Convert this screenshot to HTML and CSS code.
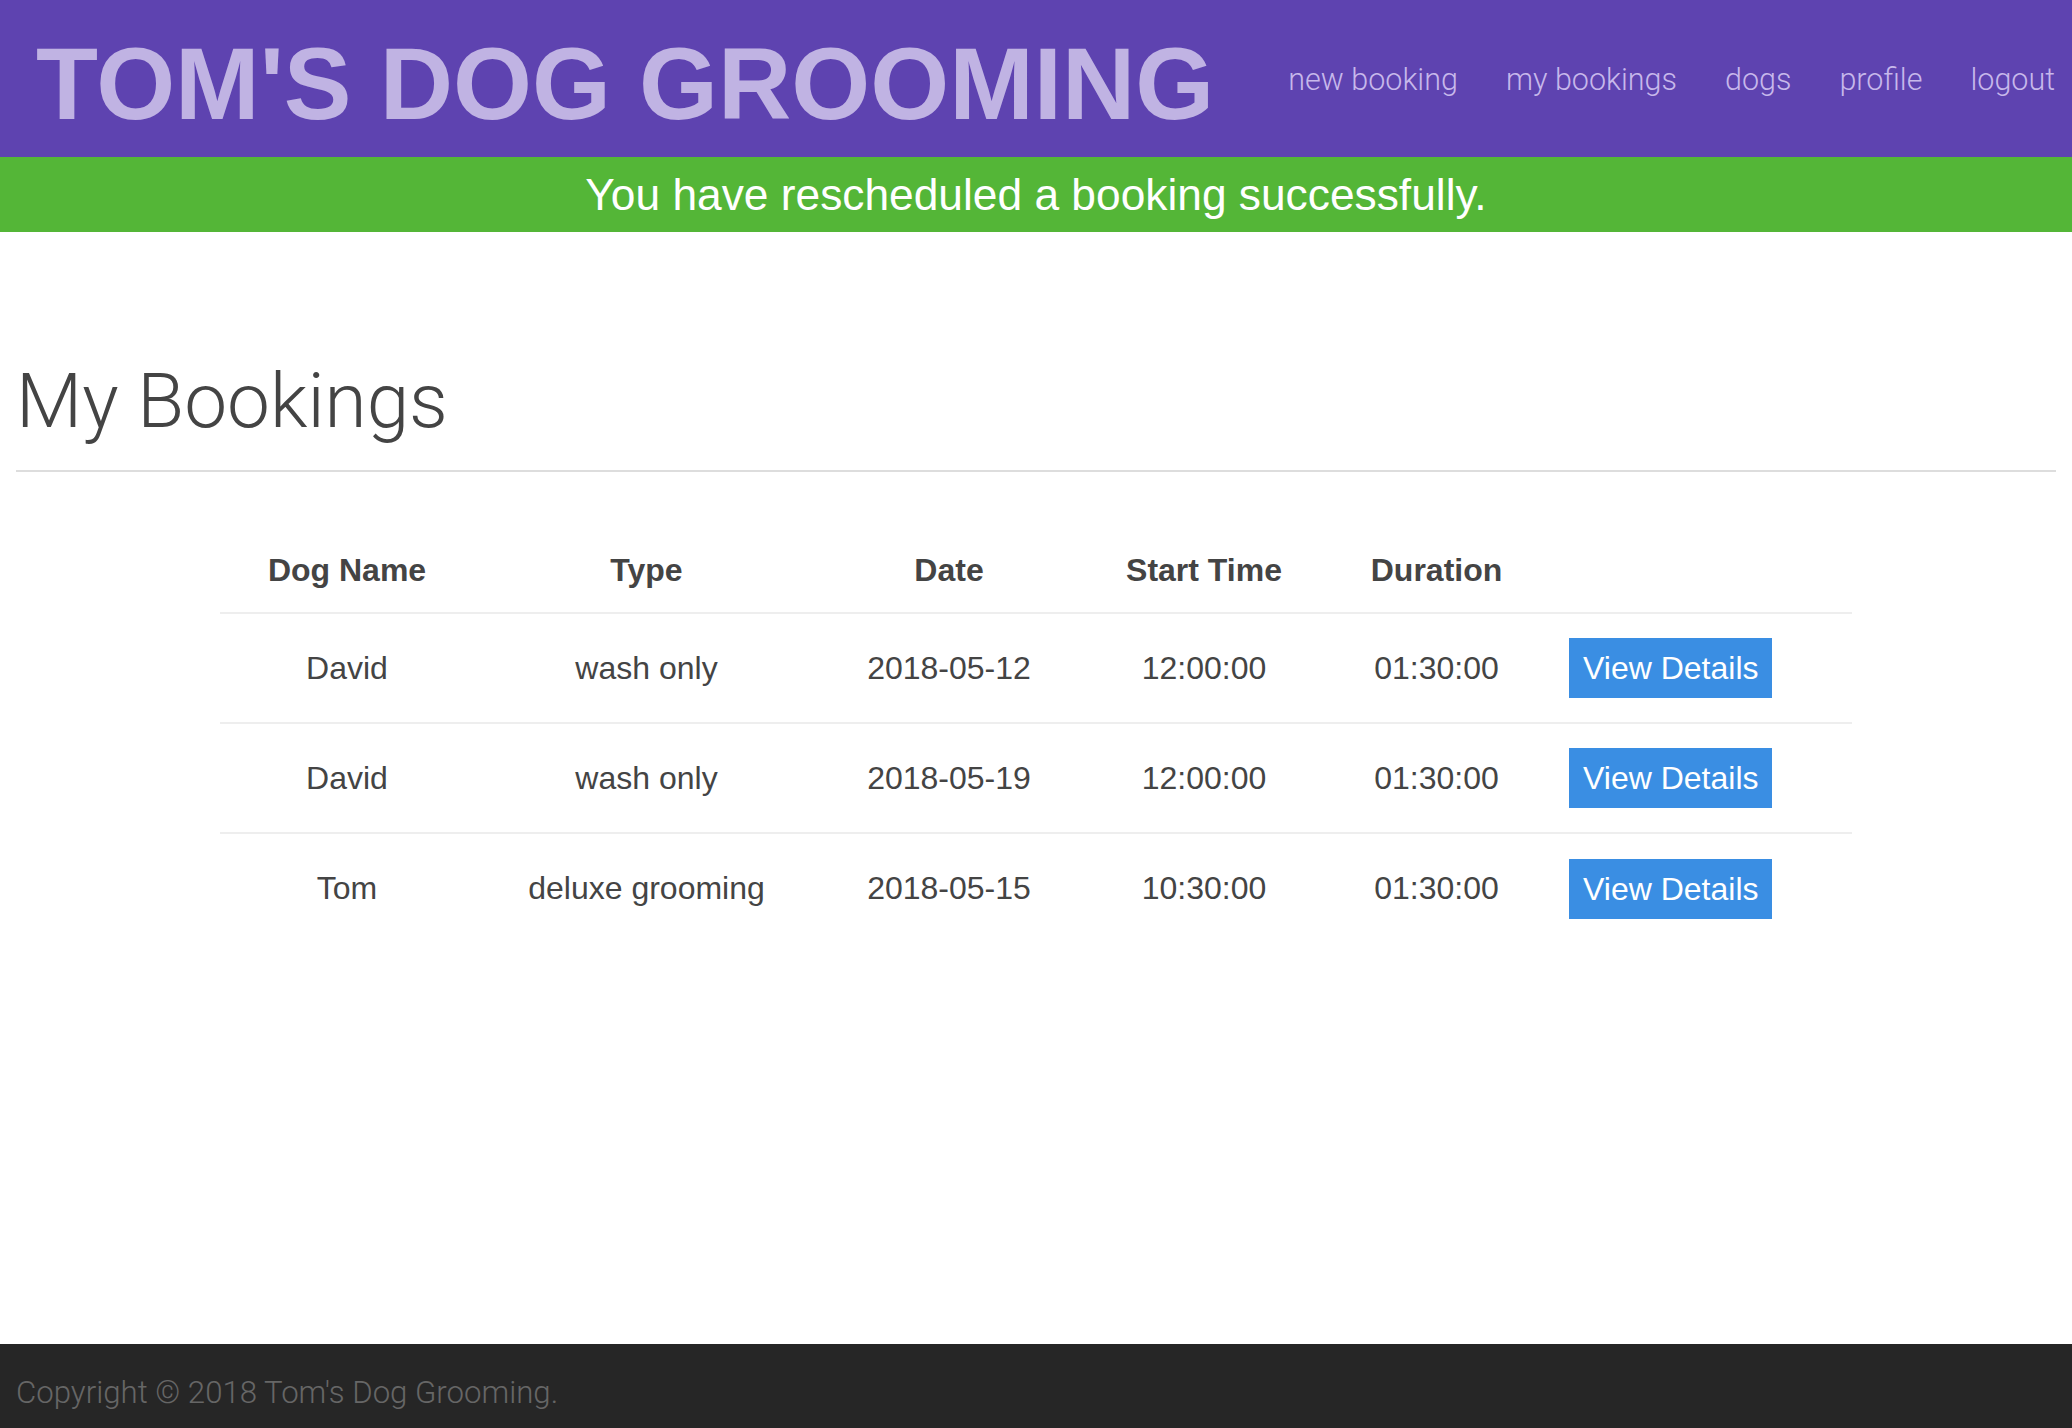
FILE: index.html
```html
<!DOCTYPE html>
<html lang="en">
<head>
<meta charset="utf-8">
<title>My Bookings - Tom's Dog Grooming</title>
<link rel="stylesheet" href="styles.css">
</head>
<body>
<header class="topbar">
  <h1 class="brand">TOM'S DOG GROOMING</h1>
  <nav class="nav">
    <a href="#">new booking</a>
    <a href="#">my bookings</a>
    <a href="#">dogs</a>
    <a href="#">profile</a>
    <a href="#">logout</a>
  </nav>
</header>
<div class="alert">You have rescheduled a booking successfully.</div>
<main class="container">
  <div class="page-header">
    <h2 class="page-title">My Bookings</h2>
  </div>
  <table class="bookings">
    <colgroup>
      <col class="c1"><col class="c2"><col class="c3"><col class="c4"><col class="c5"><col class="c6">
    </colgroup>
    <thead>
      <tr><th>Dog Name</th><th>Type</th><th>Date</th><th>Start Time</th><th>Duration</th><th></th></tr>
    </thead>
    <tbody>
      <tr><td>David</td><td>wash only</td><td>2018-05-12</td><td>12:00:00</td><td>01:30:00</td><td class="action"><a class="btn" href="#">View Details</a></td></tr>
      <tr><td>David</td><td>wash only</td><td>2018-05-19</td><td>12:00:00</td><td>01:30:00</td><td class="action"><a class="btn" href="#">View Details</a></td></tr>
      <tr><td>Tom</td><td>deluxe grooming</td><td>2018-05-15</td><td>10:30:00</td><td>01:30:00</td><td class="action"><a class="btn" href="#">View Details</a></td></tr>
    </tbody>
  </table>
</main>
<footer class="footer">Copyright © 2018 Tom's Dog Grooming.</footer>
</body>
</html>
```
FILE: styles.css
```css
* { box-sizing: border-box; }
html, body { margin: 0; padding: 0; }
body {
  font-family: "Liberation Sans", Arial, sans-serif;
  color: #444;
  background: #fff;
  min-height: 100vh;
  display: flex;
  flex-direction: column;
}
.topbar {
  height: 157px;
  background: #5e43b0;
  display: flex;
  align-items: center;
  justify-content: space-between;
  padding: 0 17px 0 36px;
}
.brand {
  margin: 13px 0 0 0;
  font-size: 101.5px;
  font-weight: bold;
  line-height: 1;
  color: #c0b3e3;
  white-space: nowrap;
}
.nav {
  display: flex;
  gap: 48px;
  margin-top: 2px;
}
.nav a {
  font-family: Roboto, "Liberation Sans", sans-serif;
  font-weight: 300;
  font-size: 30.5px;
  color: #c7b8eb;
  text-decoration: none;
  white-space: nowrap;
}
.alert {
  height: 75px;
  background: #54b637;
  color: #fff;
  font-size: 44.3px;
  line-height: 75px;
  text-align: center;
}
.container {
  flex: 1;
  padding: 125px 16px 0 16px;
}
.page-header {
  border-bottom: 2px solid #ddd;
  padding-bottom: 25px;
}
.page-title {
  margin: 0;
  font-family: Roboto, "Liberation Sans", sans-serif;
  font-weight: 300;
  font-size: 76.5px;
  line-height: 88px;
  color: #444;
}
.bookings {
  width: 80%;
  margin: 57px auto 0 auto;
  border-collapse: collapse;
  table-layout: fixed;
  font-size: 32px;
}
.c1 { width: 254px; }
.c2 { width: 345px; }
.c3 { width: 260px; }
.c4 { width: 250px; }
.c5 { width: 215px; }
.c6 { width: 308px; }
.bookings th {
  font-weight: bold;
  text-align: center;
  line-height: 35px;
  padding: 24px 0 24px 0;
  color: #444;
}
.bookings td {
  text-align: center;
  vertical-align: middle;
  height: 110px;
  padding: 0;
  line-height: 35px;
  border-top: 2px solid #eee;
  color: #444;
}
.bookings td.action {
  text-align: left;
  padding-left: 25px;
}
.btn {
  display: inline-block;
  background: #3a8ee3;
  color: #fff;
  text-decoration: none;
  font-size: 32px;
  line-height: 36px;
  padding: 12px 14px;
}
.footer {
  height: 84px;
  background: #262626;
  color: #666;
  font-family: Roboto, "Liberation Sans", sans-serif;
  font-weight: 300;
  font-size: 31.2px;
  line-height: 33px;
  padding: 32px 16px 0 16px;
}
```
